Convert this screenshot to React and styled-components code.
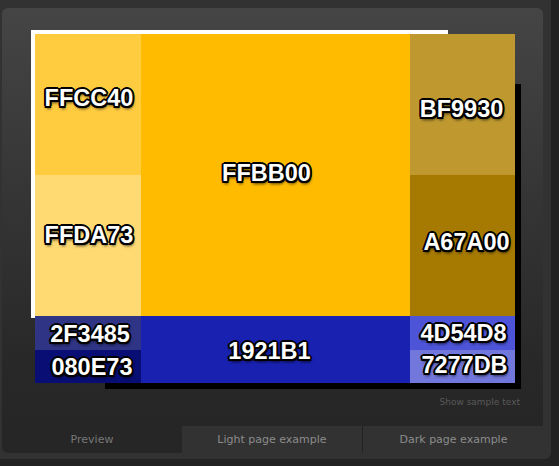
import React from "react";
import styled, { createGlobalStyle } from "styled-components";

const GlobalStyle = createGlobalStyle`
  html, body {
    margin: 0;
    padding: 0;
    background: #222;
  }
  body {
    font-family: "DejaVu Sans", Verdana, sans-serif;
  }
`;

const Frame = styled.div`
  width: 551px;
  height: 459px;
  background: #323232;
  border-radius: 0 0 6px 0;
  display: flex;
  flex-direction: column;
  overflow: hidden;
`;

const Panel = styled.div`
  margin: 8px 0 0 2px;
  width: 541px;
  height: 418px;
  box-sizing: border-box;
  padding: 26px 0 0 33px;
  border-radius: 6px 6px 0 0;
  background: linear-gradient(#454545 0%, #353535 45%, #282828 85%, #262626 100%);
  display: flex;
  flex-direction: column;
`;

const Stage = styled.div`
  position: relative;
  width: 480px;
  height: 349px;
`;

const LightBack = styled.div`
  position: absolute;
  left: -4px;
  top: -4px;
  width: 417px;
  height: 288px;
  background: #fff;
`;

const DarkBack = styled.div`
  position: absolute;
  left: 70px;
  top: 50px;
  right: -6px;
  bottom: -6px;
  background: #000;
`;

const Swatches = styled.div`
  position: relative;
  display: grid;
  grid-template-columns: 106px 269px 105px;
  grid-template-rows: 141px 141px 34px 33px;
  width: 480px;
  height: 349px;
`;

const Cell = styled.div`
  background: ${(p) => p.$bg};
  grid-row: span ${(p) => p.$span || 1};
  display: flex;
  align-items: center;
  justify-content: center;
  overflow: hidden;
`;

const Label = styled.span`
  font-family: "Liberation Sans", Arial, sans-serif;
  font-weight: bold;
  font-size: 23.5px;
  line-height: 1;
  color: #fff;
  white-space: nowrap;
  transform: translate(${(p) => p.$dx || 0}px, ${(p) => p.$dy || 0}px);
  text-shadow: -2px 0 0 #000, 2px 0 0 #000, 0 -2px 0 #000, 0 2px 0 #000,
    -1.5px -1.5px 0 #000, 1.5px -1.5px 0 #000, -1.5px 1.5px 0 #000,
    1.5px 1.5px 0 #000, 1px 3px 3px rgba(0, 0, 0, 0.7);
`;

const SampleLink = styled.div`
  margin: 14px 23px 0 0;
  align-self: flex-end;
  font-size: 9px;
  color: #595959;
`;

const Tabs = styled.div`
  display: flex;
  margin-left: 2px;
  width: 541px;
  height: 27px;
`;

const Tab = styled.div`
  flex: 0 0 ${(p) => p.$w}px;
  display: flex;
  align-items: center;
  justify-content: center;
  font-size: 11px;
  color: ${(p) => (p.$active ? "#777" : "#8c8c8c")};
  background: ${(p) => (p.$active ? "#262626" : "transparent")};
  border-radius: ${(p) => (p.$active ? "0 0 0 6px" : "0")};
  border-left: ${(p) => (p.$divider ? "1px solid #222" : "none")};
`;

const cells = [
  { hex: "FFCC40", bg: "#FFCC40", dx: 1, dy: -6 },
  { hex: "FFBB00", bg: "#FFBB00", span: 2, dx: -9, dy: -1 },
  { hex: "BF9930", bg: "#BF9930", dx: -1, dy: 5 },
  { hex: "FFDA73", bg: "#FFDA73", dx: 1, dy: -10 },
  { hex: "A67A00", bg: "#A67A00", dx: 4, dy: -3 },
  { hex: "2F3485", bg: "#2F3485", dx: 2, dy: 2 },
  { hex: "1921B1", bg: "#1921B1", span: 2, dx: -6, dy: 2 },
  { hex: "4D54D8", bg: "#4D54D8", dx: 1, dy: 1 },
  { hex: "080E73", bg: "#080E73", dx: 4, dy: 1 },
  { hex: "7277DB", bg: "#7277DB", dx: 2, dy: -1 },
];

export default function App() {
  return (
    <>
      <GlobalStyle />
      <Frame>
        <Panel>
          <Stage>
            <LightBack />
            <DarkBack />
            <Swatches>
              {cells.map((c) => (
                <Cell key={c.hex} $bg={c.bg} $span={c.span}>
                  <Label $dx={c.dx} $dy={c.dy}>
                    {c.hex}
                  </Label>
                </Cell>
              ))}
            </Swatches>
          </Stage>
          <SampleLink>Show sample text</SampleLink>
        </Panel>
        <Tabs>
          <Tab $w={180} $active>
            Preview
          </Tab>
          <Tab $w={180}>Light page example</Tab>
          <Tab $w={181} $divider>
            Dark page example
          </Tab>
        </Tabs>
      </Frame>
    </>
  );
}
